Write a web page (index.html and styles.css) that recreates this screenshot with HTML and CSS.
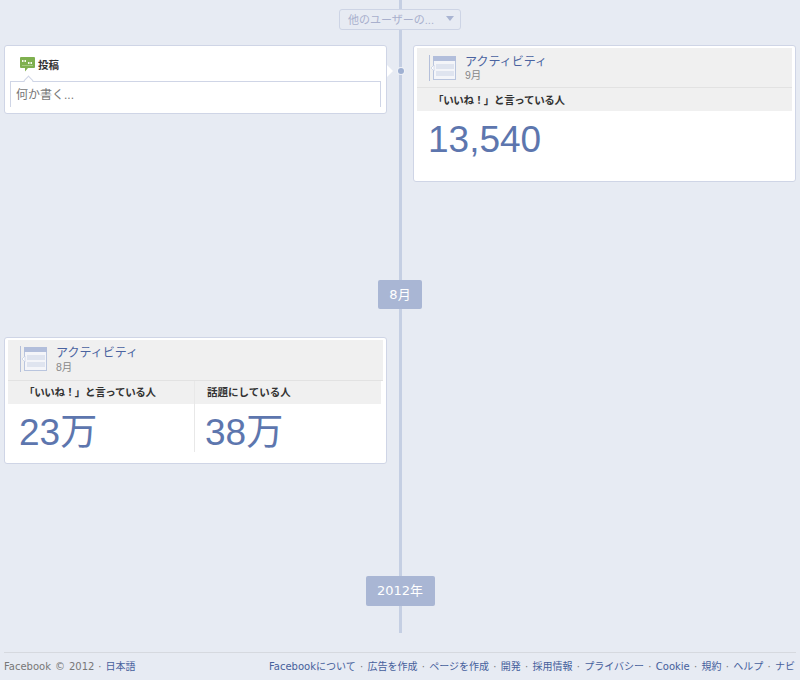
FILE: index.html
```html
<!DOCTYPE html>
<html lang="ja">
<head>
<meta charset="utf-8">
<title>Facebook</title>
<link rel="stylesheet" href="styles.css">
</head>
<body>
<main class="timeline">
  <div class="spine"></div>
  <div class="filter-row">
    <button class="filter">他のユーザーの...<span class="caret"></span></button>
  </div>
  <section class="row row-top">
    <article class="card composer">
      <div class="composer-head">
        <svg class="post-icon" width="15" height="15" viewBox="0 0 15 15"><path d="M1 0h13a1 1 0 0 1 1 1v9a1 1 0 0 1-1 1H8l-3 3.500V11H1a1 1 0 0 1-1-1V1a1 1 0 0 1 1-1z" fill="#7fb04f"/><path d="M2 3h1.500v2H2zM4.500 3H6v2H4.500zM8 5h1.500v2H8zM10.500 5H12v2h-1.500z" fill="#f4f9ec"/><path d="M2 8h11v1H2z" fill="#a5c97f"/></svg>
        <strong>投稿</strong>
      </div>
      <div class="composer-box">何か書く...</div>
      <span class="notch"></span>
      <span class="pointer"></span>
    </article>
    <span class="dot"></span>
    <article class="card activity activity-right">
      <header class="activity-head">
        <svg class="act-icon" width="29" height="27" viewBox="0 0 29 27"><path d="M0.500 0v26" stroke="#b5c0da" fill="none"/><rect x="4.500" y="1.500" width="22" height="23" fill="#f4f5f9" stroke="#b9c5de"/><rect x="4" y="1" width="23" height="5" fill="#b2bedb"/><rect x="7" y="9" width="18" height="5" fill="#dfe4ef"/><rect x="7" y="16" width="18" height="5" fill="#dfe4ef"/><path d="M5 10l-3 3 3 3z" fill="#fff" stroke="#b9c5de" stroke-width=".6"/></svg>
        <div class="act-title"><a>アクティビティ</a><span>9月</span></div>
      </header>
      <div class="stats">
        <div class="stat">
          <h3 class="likes">「いいね！」と言っている人</h3>
          <p>13,540</p>
        </div>
      </div>
    </article>
  </section>
  <div class="marker marker-month">8月</div>
  <section class="row row-august">
    <article class="card activity activity-left">
      <header class="activity-head">
        <svg class="act-icon" width="29" height="27" viewBox="0 0 29 27"><path d="M0.500 0v26" stroke="#b5c0da" fill="none"/><rect x="4.500" y="1.500" width="22" height="23" fill="#f4f5f9" stroke="#b9c5de"/><rect x="4" y="1" width="23" height="5" fill="#b2bedb"/><rect x="7" y="9" width="18" height="5" fill="#dfe4ef"/><rect x="7" y="16" width="18" height="5" fill="#dfe4ef"/><path d="M5 10l-3 3 3 3z" fill="#fff" stroke="#b9c5de" stroke-width=".6"/></svg>
        <div class="act-title"><a>アクティビティ</a><span>8月</span></div>
      </header>
      <div class="stats">
        <div class="stat">
          <h3 class="likes">「いいね！」と言っている人</h3>
          <p>23万</p>
        </div>
        <div class="stat stat-second">
          <h3>話題にしている人</h3>
          <p>38万</p>
        </div>
      </div>
    </article>
  </section>
  <div class="marker marker-year">2012年</div>
</main>
<footer class="footer">
  <div class="foot-left">Facebook © 2012 · <a>日本語</a></div>
  <nav class="foot-right"><a>Facebookについて</a> · <a>広告を作成</a> · <a>ページを作成</a> · <a>開発</a> · <a>採用情報</a> · <a>プライバシー</a> · <a>Cookie</a> · <a>規約</a> · <a>ヘルプ</a> · <a>ナビ</a></nav>
</footer>
</body>
</html>
```
FILE: styles.css
```css
* { box-sizing: border-box; }
html, body { margin: 0; padding: 0; }
body {
  width: 800px;
  height: 680px;
  overflow: hidden;
  background: #e7ebf3;
  font-family: "Liberation Sans", "Noto Sans CJK JP", sans-serif;
  color: #333;
}
.timeline {
  position: relative;
  height: 633px;
  padding-top: 9px;
}
.spine {
  position: absolute;
  left: 399px;
  top: 0;
  bottom: 0;
  width: 3px;
  background: #c5cfe3;
}
.filter-row { position: relative; display: flex; justify-content: center; }
.filter {
  display: flex;
  align-items: center;
  justify-content: space-between;
  width: 122px;
  height: 21px;
  padding: 0 6px 2px 8px;
  border: 1px solid #cdd4e5;
  border-radius: 3px;
  background: #e7ebf3;
  color: #a9b0cd;
  white-space: nowrap;
  font: 11px "Liberation Sans", "Noto Sans CJK JP", sans-serif;
}
.caret {
  border: 4px solid transparent;
  border-top: 5px solid #a9b4d2;
  border-bottom: 0;
  width: 0;
  height: 0;
}
.row {
  position: relative;
  display: flex;
  align-items: flex-start;
  padding: 0 4px;
}
.row-top { margin-top: 15px; justify-content: space-between; }
.card {
  position: relative;
  background: #fff;
  border: 1px solid #cfd5e6;
  border-radius: 3px;
}
.composer { width: 383px; height: 69px; padding: 1px 5px 0; }
.composer-head {
  display: flex;
  align-items: center;
  height: 34px;
  padding-left: 10px;
  font-size: 10.500px;
  color: #333;
}
.post-icon { margin-right: 3px; }
.composer-head strong { font-weight: 700; }
.composer-box {
  height: 26px;
  border: 1px solid #cfd5e6;
  border-bottom: 0;
  padding: 4px 5px 0;
  font-size: 12px;
  line-height: 18px;
  color: #777;
}
.notch {
  position: absolute;
  left: 20px;
  top: 31px;
  width: 7px;
  height: 7px;
  background: #fff;
  border-top: 1px solid #cfd5e6;
  border-left: 1px solid #cfd5e6;
  transform: rotate(45deg);
}
.pointer {
  position: absolute;
  right: -7px;
  top: 19px;
  width: 0;
  height: 0;
  border: 6px solid transparent;
  border-left: 6px solid #fff;
  border-right: 0;
}
.dot {
  position: absolute;
  left: 397.500px;
  top: 22.500px;
  width: 6px;
  height: 6px;
  border-radius: 50%;
  background: #9fb0d2;
  box-shadow: 0 0 0 1px #eef1f7;
}
.activity { padding: 2px 3px 0; }
.activity-right { width: 383px; height: 137px; }
.activity-left { width: 383px; height: 127px; }
.activity-head {
  display: flex;
  align-items: flex-start;
  height: 40px;
  padding: 7px 0 0 12px;
  background: #f0f0f0;
  border-bottom: 1px solid #e2e2e2;
}
.activity-left .activity-head { padding-top: 6px; height: 41px; }
.act-icon { flex: none; margin-right: 7px; }
.act-title { display: flex; flex-direction: column; }
.act-title a {
  font-size: 12px;
  line-height: 15px;
  color: #4a63a0;
}
.activity-right .act-title a { line-height: 14px; }
.act-title span {
  font-size: 10.500px;
  line-height: 13px;
  color: #888;
}
.stats { display: flex; }
.stat { flex: 1; }
.stat h3 {
  margin: 0;
  height: 23px;
  padding: 5px 0 0 15px;
  background: #f0f0f0;
  font-size: 10.500px;
  line-height: 14px;
  font-weight: 700;
  color: #333;
}
.stat h3.likes { padding-left: 16px; letter-spacing: -.33px; }
.activity-left .stat h3 { padding-top: 4px; }
.stat p {
  margin: 0;
  padding: 9px 0 0 11px;
  font-size: 37px;
  line-height: 40px;
  color: #5d76ae;
}
.activity-left .stats { margin-right: 2px; }
.activity-left .stat:first-child { flex: none; width: 186px; }
.stat-second { border-left: 1px solid #e8e8e8; height: 71px; }
.stat-second h3 { padding-left: 12px; }
.activity-left .stat-second p { padding-left: 10px; }
.marker {
  position: relative;
  width: fit-content;
  margin-left: auto;
  margin-right: auto;
  border-radius: 2px;
  background: #a9b6d4;
  color: #fff;
  font-family: "DejaVu Sans", "Noto Sans CJK JP", sans-serif;
  font-size: 13px;
  line-height: 29px;
  height: 29px;
  text-align: center;
}
.marker-month { margin-top: 98px; width: 44px; }
.row-august { margin-top: 28px; }
.marker-year { margin-top: 112px; width: 69px; height: 30px; line-height: 30px; }
.footer {
  display: flex;
  justify-content: space-between;
  margin: 19px 4px 0;
  padding-top: 6px;
  border-top: 1px solid #d6d9df;
  font-family: "DejaVu Sans", "Noto Sans CJK JP", sans-serif;
  font-size: 10px;
  line-height: 15px;
  color: #777;
}
.footer a { color: #46609c; }
.foot-left { word-spacing: .8px; }
.foot-right { white-space: nowrap; padding-right: 1px; word-spacing: 1.1px; }
```
